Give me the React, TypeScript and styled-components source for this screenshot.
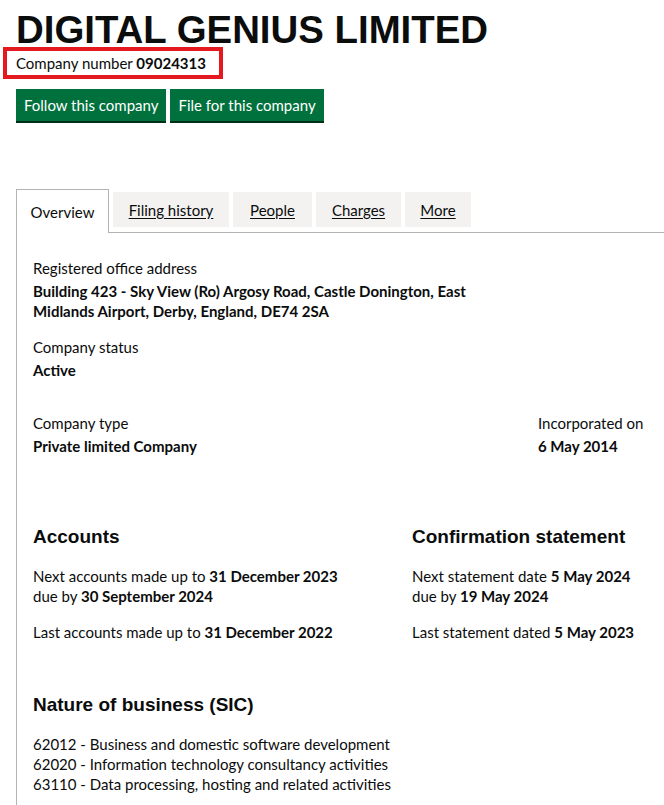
import React from "react";
import styled, { createGlobalStyle } from "styled-components";

const GlobalStyle = createGlobalStyle`
  html, body {
    margin: 0;
    padding: 0;
    background: #ffffff;
  }
  body {
    font-family: Lato, "Noto Sans", sans-serif;
    color: #0b0c0c;
    font-size: 15px;
    line-height: 20px;
    overflow: hidden;
  }
`;

const tabs = [
  { label: "Overview", width: 93 },
  { label: "Filing history", width: 116 },
  { label: "People", width: 79 },
  { label: "Charges", width: 85 },
  { label: "More", width: 66 },
];

const sicCodes = [
  "62012 - Business and domestic software development",
  "62020 - Information technology consultancy activities",
  "63110 - Data processing, hosting and related activities",
];

const App = () => {
  return (
    <Page>
      <GlobalStyle />
      <Header>
        <Title>DIGITAL GENIUS LIMITED</Title>
        <Highlight>
          Company number <strong>09024313</strong>
        </Highlight>
        <Actions>
          <GreenButton>Follow this company</GreenButton>
          <GreenButton>File for this company</GreenButton>
        </Actions>
      </Header>

      <TabList>
        {tabs.map((t, i) => (
          <Tab key={t.label} $active={i === 0} $width={t.width}>
            <TabLabel $active={i === 0}>{t.label}</TabLabel>
          </Tab>
        ))}
      </TabList>

      <Panel>
        <Field>
          <Label>Registered office address</Label>
          <Value>
            Building 423 - Sky View (Ro) Argosy Road, Castle Donington, East
            <br />
            Midlands Airport, Derby, England, DE74 2SA
          </Value>
        </Field>
        <Field>
          <Label>Company status</Label>
          <Value>Active</Value>
        </Field>

        <TwoCol $left={505}>
          <Field>
            <Label>Company type</Label>
            <Value>Private limited Company</Value>
          </Field>
          <Field>
            <Label>Incorporated on</Label>
            <Value>6 May 2014</Value>
          </Field>
        </TwoCol>

        <TwoCol $left={379} $top={52}>
          <Section>
            <Heading>Accounts</Heading>
            <Para>
              Next accounts made up to <strong>31 December 2023</strong>
              <br />
              due by <strong>30 September 2024</strong>
            </Para>
            <Para>
              Last accounts made up to <strong>31 December 2022</strong>
            </Para>
          </Section>
          <Section>
            <Heading>Confirmation statement</Heading>
            <Para>
              Next statement date <strong>5 May 2024</strong>
              <br />
              due by <strong>19 May 2024</strong>
            </Para>
            <Para>
              Last statement dated <strong>5 May 2023</strong>
            </Para>
          </Section>
        </TwoCol>

        <Section $top={34}>
          <Heading>Nature of business (SIC)</Heading>
          <SicList>
            {sicCodes.map((s) => (
              <li key={s}>{s}</li>
            ))}
          </SicList>
        </Section>
      </Panel>
    </Page>
  );
};

export default App;

const Page = styled.div`
  width: 664px;
  min-height: 805px;
`;

const Header = styled.div`
  padding-left: 16px;
`;

const Title = styled.h1`
  margin: 12px 0 0;
  font-family: "Liberation Sans", Arial, sans-serif;
  font-weight: 700;
  font-size: 38.4px;
  line-height: 35px;
  color: #0b0c0c;
`;

const Highlight = styled.div`
  display: inline-block;
  margin-left: -13px;
  padding: 2px 13px 2px 9px;
  border: 4px solid #e3191f;
  line-height: 20px;

  strong {
    font-weight: 700;
  }
`;

const Actions = styled.div`
  display: flex;
  gap: 4px;
  margin-top: 10px;
`;

const GreenButton = styled.button`
  font-family: inherit;
  font-size: 15px;
  line-height: 20px;
  color: #ffffff;
  background: #00703c;
  border: none;
  border-radius: 0;
  padding: 6px 8px;
  height: 32px;
  box-shadow: 0 2px 0 #002d18;
  cursor: pointer;
`;

const TabList = styled.ul`
  display: flex;
  align-items: flex-start;
  list-style: none;
  margin: 68px 0 0 16px;
  padding: 0;
  border-bottom: 1px solid #b1b4b6;
`;

const Tab = styled.li<{ $active?: boolean; $width: number }>`
  width: ${(p) => p.$width}px;
  margin-right: 4px;
  background: ${(p) => (p.$active ? "#ffffff" : "#f3f2f1")};
  border: ${(p) => (p.$active ? "1px solid #b1b4b6" : "none")};
  border-bottom: none;
  margin-top: ${(p) => (p.$active ? "0" : "3px")};
  margin-bottom: ${(p) => (p.$active ? "-1px" : "0")};
  height: ${(p) => (p.$active ? "44px" : "35px")};
  display: flex;
  justify-content: center;
  align-items: ${(p) => (p.$active ? "flex-start" : "center")};
  padding-top: ${(p) => (p.$active ? "12px" : "0")};
  box-sizing: border-box;
`;

const TabLabel = styled.span<{ $active?: boolean }>`
  color: #0b0c0c;
  text-decoration: ${(p) => (p.$active ? "none" : "underline")};
  text-underline-offset: 2px;
  cursor: pointer;
`;

const Panel = styled.div`
  margin-left: 16px;
  border-left: 1px solid #b1b4b6;
  padding: 25px 0 20px 16px;
`;

const Field = styled.div`
  margin-bottom: 16px;
`;

const Label = styled.div`
  margin-bottom: 3px;
`;

const Value = styled.div`
  font-weight: 700;
`;

const TwoCol = styled.div<{ $left: number; $top?: number }>`
  display: grid;
  grid-template-columns: ${(p) => p.$left}px 1fr;
  margin-top: ${(p) => p.$top ?? 33}px;
`;

const Section = styled.div<{ $top?: number }>`
  margin-top: ${(p) => p.$top ?? 0}px;
`;

const Heading = styled.h2`
  margin: 0 0 17px;
  font-family: "Liberation Sans", Arial, sans-serif;
  font-weight: 700;
  font-size: 19px;
  line-height: 25px;
`;

const Para = styled.p`
  margin: 0 0 16px;

  strong {
    font-weight: 700;
  }
`;

const SicList = styled.ul`
  list-style: none;
  margin: 0;
  padding: 0;
`;
